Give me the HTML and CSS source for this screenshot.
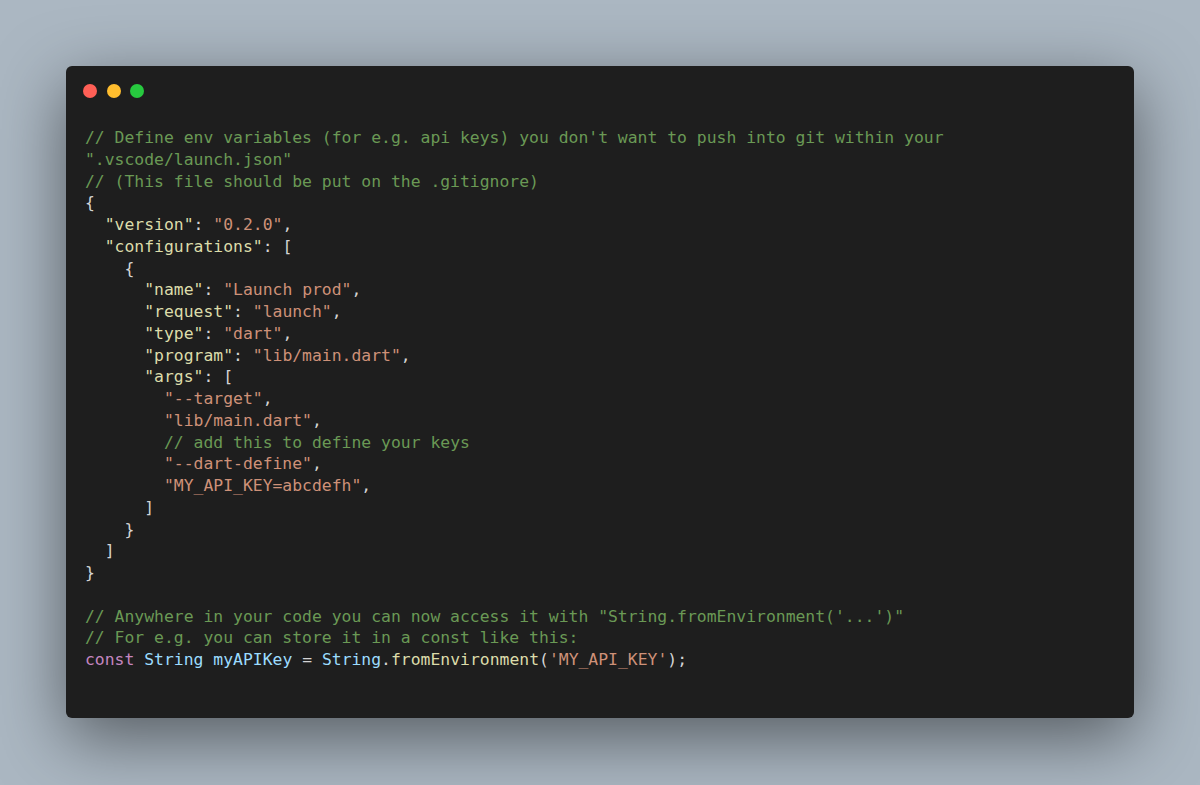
FILE: index.html
```html
<!DOCTYPE html>
<html lang="en">
<head>
<meta charset="utf-8">
<title>Code snippet</title>
<link rel="stylesheet" href="styles.css">
</head>
<body>
<div class="stage">
  <div class="window">
    <div class="controls">
      <span class="dot red"></span>
      <span class="dot yellow"></span>
      <span class="dot green"></span>
    </div>
<pre class="code"><span class="c">// Define env variables (for e.g. api keys) you don't want to push into git within your</span>
<span class="c">".vscode/launch.json"</span>
<span class="c">// (This file should be put on the .gitignore)</span>
<span class="p">{</span>
  <span class="k">"version"</span><span class="p">: </span><span class="s">"0.2.0"</span><span class="p">,</span>
  <span class="k">"configurations"</span><span class="p">: [</span>
    <span class="p">{</span>
      <span class="k">"name"</span><span class="p">: </span><span class="s">"Launch prod"</span><span class="p">,</span>
      <span class="k">"request"</span><span class="p">: </span><span class="s">"launch"</span><span class="p">,</span>
      <span class="k">"type"</span><span class="p">: </span><span class="s">"dart"</span><span class="p">,</span>
      <span class="k">"program"</span><span class="p">: </span><span class="s">"lib/main.dart"</span><span class="p">,</span>
      <span class="k">"args"</span><span class="p">: [</span>
        <span class="s">"--target"</span><span class="p">,</span>
        <span class="s">"lib/main.dart"</span><span class="p">,</span>
        <span class="c">// add this to define your keys</span>
        <span class="s">"--dart-define"</span><span class="p">,</span>
        <span class="s">"MY_API_KEY=abcdefh"</span><span class="p">,</span>
      <span class="p">]</span>
    <span class="p">}</span>
  <span class="p">]</span>
<span class="p">}</span>

<span class="c">// Anywhere in your code you can now access it with "String.fromEnvironment('...')"</span>
<span class="c">// For e.g. you can store it in a const like this:</span>
<span class="kw">const</span> <span class="t">String</span> <span class="v">myAPIKey</span> <span class="p">=</span> <span class="t">String</span><span class="p">.</span><span class="f">fromEnvironment</span><span class="p">(</span><span class="s">'MY_API_KEY'</span><span class="p">);</span></pre>
  </div>
</div>
</body>
</html>
```

FILE: styles.css
```css
html, body {
  margin: 0;
  padding: 0;
}

body {
  background: #abb7c2;
  width: 1200px;
  height: 785px;
  overflow: hidden;
}

.stage {
  padding: 66px 66px 0 66px;
}

.window {
  background: #1e1e1e;
  border-radius: 6px;
  height: 652px;
  box-sizing: border-box;
  padding: 18px 19px 0 19px;
  box-shadow: 0 20px 68px rgba(0, 0, 0, 0.5);
}

.controls {
  display: flex;
  gap: 9.5px;
  margin-left: -2px;
  height: 14px;
}

.dot {
  width: 14px;
  height: 14px;
  border-radius: 50%;
  display: block;
}

.red { background: #ff5f56; }
.yellow { background: #ffbd2e; }
.green { background: #27c93f; }

.code {
  margin: 29px 0 0 0;
  font-family: "DejaVu Sans Mono", monospace;
  font-size: 16.4px;
  line-height: 21.75px;
  color: #d4d4d4;
  white-space: pre;
}

.c { color: #6a9955; }
.k { color: #dcdcaa; }
.s { color: #ce9178; }
.p { color: #d4d4d4; }
.kw { color: #c586c0; }
.t { color: #9cdcfe; }
.v { color: #9cdcfe; }
.f { color: #dcdcaa; }
```
